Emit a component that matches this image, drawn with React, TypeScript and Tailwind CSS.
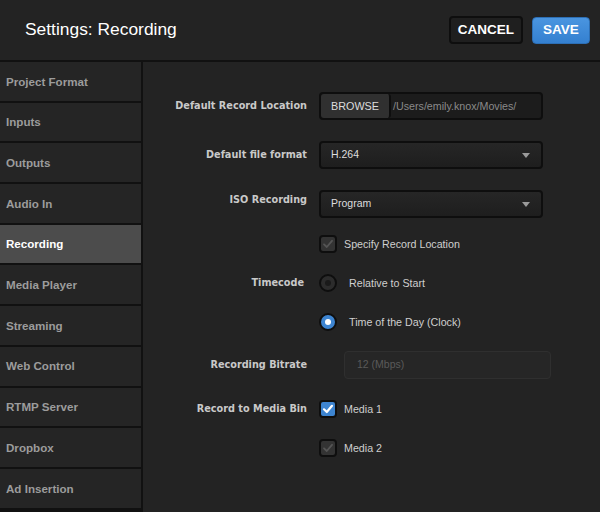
import React from "react";

const sideItems = [
  "Project Format",
  "Inputs",
  "Outputs",
  "Audio In",
  "Recording",
  "Media Player",
  "Streaming",
  "Web Control",
  "RTMP Server",
  "Dropbox",
  "Ad Insertion",
];

const labelCls =
  "w-[164px] shrink-0 text-right text-[9.7px] font-bold text-[#c9c9c9] [font-family:'DejaVu_Sans',Verdana,sans-serif]";
const valueFont = "[font-family:'Liberation_Sans',Arial,sans-serif]";

function Check({ checked }: { checked?: boolean }) {
  return (
    <div
      className={
        "w-[18px] h-[18px] rounded-[4px] border-2 border-[#0e0e0e] flex items-center justify-center shrink-0 " +
        (checked ? "bg-[#3d84d0]" : "bg-[#333333]")
      }
    >
      <svg width="12" height="12" viewBox="0 0 12 12">
        <path
          d="M2 6.3 L4.8 9 L10 2.8"
          fill="none"
          stroke={checked ? "#ffffff" : "#555555"}
          strokeWidth={checked ? 2.2 : 1.8}
          strokeLinecap="round"
          strokeLinejoin="round"
        />
      </svg>
    </div>
  );
}

function Radio({ checked }: { checked?: boolean }) {
  return (
    <div
      className={
        "w-[18px] h-[18px] rounded-full border-2 border-[#0e0e0e] flex items-center justify-center shrink-0 " +
        (checked ? "bg-[#3d84d0]" : "bg-[#2c2c2c]")
      }
    >
      <div
        className={
          "w-[6px] h-[6px] rounded-full " +
          (checked ? "bg-white" : "bg-[#1a1a1a]")
        }
      />
    </div>
  );
}

function Caret() {
  return (
    <svg width="8" height="5" viewBox="0 0 8 5" className="mr-[11px]">
      <path d="M0 0 H8 L4 5 Z" fill="#9a9a9a" />
    </svg>
  );
}

export default function App() {
  return (
    <div className={"w-[600px] h-[512px] overflow-hidden bg-[#232323] flex flex-col " + valueFont}>
      {/* Header */}
      <div className="h-[62px] shrink-0 flex items-center border-b-2 border-[#111111] bg-[#232323]">
        <div className="ml-[25px] text-[17.4px] text-white flex-1 leading-none">
          Settings: Recording
        </div>
        <button className="h-[28px] px-[7px] rounded-[4px] border-2 border-[#0e0e0e] bg-[#1f1f1f] text-white text-[13.5px] font-bold mr-[9px] leading-none">
          CANCEL
        </button>
        <button className="h-[27px] w-[58px] mr-[10px] rounded-[4px] border border-[#2d6fb5] bg-gradient-to-b from-[#4a95e0] to-[#3480d0] text-white text-[13.5px] font-bold leading-none">
          SAVE
        </button>
      </div>

      {/* Body */}
      <div className="flex flex-1 min-h-0">
        <div className="w-[143px] shrink-0 border-r-2 border-[#111111] bg-[#111111] flex flex-col">
          {sideItems.map((s) => (
            <div
              key={s}
              className={
                "h-[38.7px] shrink-0 mb-[2px] flex items-center pl-[6px] text-[11.6px] font-bold " +
                (s === "Recording"
                  ? "bg-[#4c4c4c] text-white"
                  : "bg-[#252525] text-[#9c9c9c]")
              }
            >
              {s}
            </div>
          ))}
        </div>

        <div className="flex-1 bg-[#232323] flex flex-col">
          {/* Row 1 */}
          <div className="flex items-center mt-[30px] h-[28px]">
            <div className={labelCls}>Default Record Location</div>
            <div className="ml-[12px] w-[224px] h-[28px] rounded-[4px] border-2 border-[#0e0e0e] bg-[#1c1c1c] flex items-stretch overflow-hidden">
              <div className="w-[70px] bg-[#303030] rounded-[3px] border-r-2 border-[#0e0e0e] flex items-center justify-center text-[10.8px] text-[#dddddd]">
                BROWSE
              </div>
              <div className="flex items-center pl-[2px] text-[10.7px] text-[#8a8a8a]">
                /Users/emily.knox/Movies/
              </div>
            </div>
          </div>

          {/* Row 2 */}
          <div className="flex items-center mt-[21px] h-[28px]">
            <div className={labelCls}>Default file format</div>
            <div className="ml-[12px] w-[224px] h-[28px] rounded-[4px] border-2 border-[#0e0e0e] bg-gradient-to-b from-[#262626] to-[#1e1e1e] flex items-center justify-between">
              <span className="pl-[10px] text-[10.5px] text-[#dddddd]">H.264</span>
              <Caret />
            </div>
          </div>

          {/* Row 3 */}
          <div className="flex items-start mt-[21px] h-[28px]">
            <div className={labelCls + " pt-[3px]"}>ISO Recording</div>
            <div className="ml-[12px] w-[224px] h-[28px] rounded-[4px] border-2 border-[#0e0e0e] bg-gradient-to-b from-[#262626] to-[#1e1e1e] flex items-center justify-between">
              <span className="pl-[10px] text-[10.5px] text-[#dddddd]">Program</span>
              <Caret />
            </div>
          </div>

          {/* Row 4 */}
          <div className="flex items-center mt-[17px] h-[18px]">
            <div className={labelCls}></div>
            <div className="ml-[12px] flex items-center gap-[7px]">
              <Check />
              <span className="text-[10.7px] text-[#cfcfcf]">Specify Record Location</span>
            </div>
          </div>

          {/* Row 5 */}
          <div className="flex items-center mt-[21px] h-[18px]">
            <div className={labelCls + " pr-[3px]"}>Timecode</div>
            <div className="ml-[12px] flex items-center gap-[12px]">
              <Radio />
              <span className="text-[10.7px] text-[#cfcfcf]">Relative to Start</span>
            </div>
          </div>

          {/* Row 6 */}
          <div className="flex items-center mt-[21px] h-[18px]">
            <div className={labelCls}></div>
            <div className="ml-[12px] flex items-center gap-[12px]">
              <Radio checked />
              <span className="text-[10.7px] text-[#cfcfcf]">Time of the Day (Clock)</span>
            </div>
          </div>

          {/* Row 7 */}
          <div className="flex items-center mt-[20px] h-[28px]">
            <div className={labelCls}>Recording Bitrate</div>
            <div className="ml-[37px] w-[207px] h-[28px] rounded-[4px] border border-[#2f2f2f] bg-[#262626] flex items-center">
              <span className="pl-[12px] text-[10.5px] text-[#5a5a5a]">12 (Mbps)</span>
            </div>
          </div>

          {/* Row 8 */}
          <div className="flex items-center mt-[21px] h-[18px]">
            <div className={labelCls}>Record to Media Bin</div>
            <div className="ml-[12px] flex items-center gap-[7px]">
              <Check checked />
              <span className="text-[10.7px] text-[#cfcfcf]">Media 1</span>
            </div>
          </div>

          {/* Row 9 */}
          <div className="flex items-center mt-[21px] h-[18px]">
            <div className={labelCls}></div>
            <div className="ml-[12px] flex items-center gap-[7px]">
              <Check />
              <span className="text-[10.7px] text-[#cfcfcf]">Media 2</span>
            </div>
          </div>
        </div>
      </div>
    </div>
  );
}
